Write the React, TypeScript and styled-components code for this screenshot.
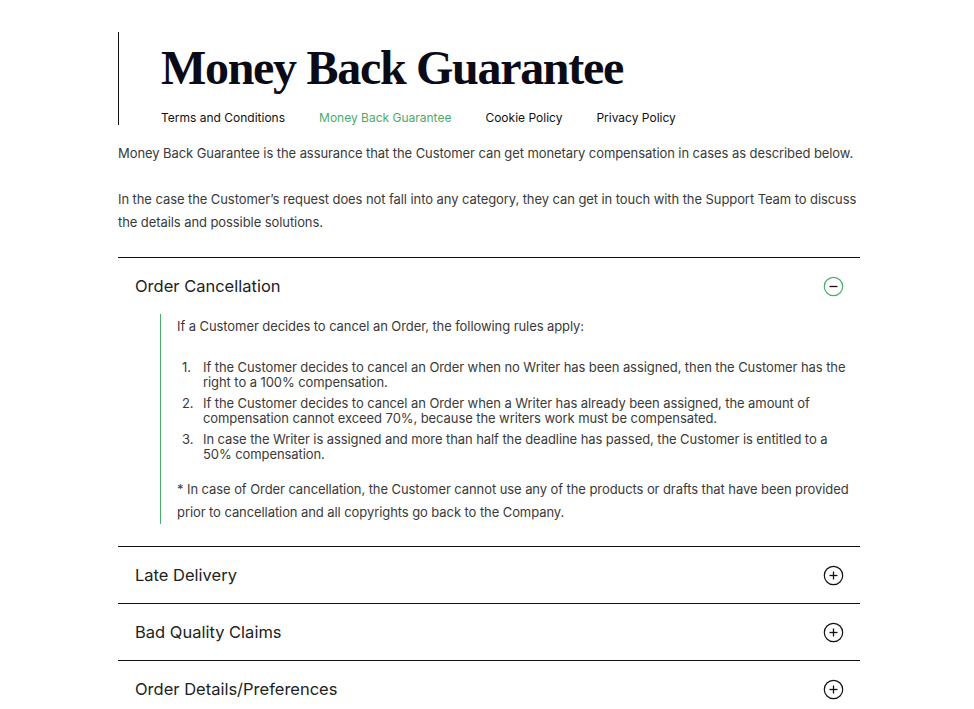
import React from "react";
import styled, { createGlobalStyle } from "styled-components";

const Global = createGlobalStyle`
  html, body { margin: 0; padding: 0; background: #fff; }
  body { font-family: Inter, "Noto Sans", sans-serif; color: #333; }
`;

const Page = styled.div`
  width: 742px;
  margin: 0 auto;
  padding: 32px 0 0 0;
  transform: translateX(2px);
`;

const Header = styled.header`
  border-left: 1px solid #111;
  padding-left: 42px;
  height: 93px;
  display: flex;
  flex-direction: column;
`;

const Title = styled.h1`
  margin: 10px 0 0 0;
  font-family: "Liberation Serif", serif;
  font-weight: 700;
  font-size: 48px;
  line-height: 52px;
  color: #0b0b18;
  letter-spacing: -1.3px;
`;

const Nav = styled.nav`
  display: flex;
  gap: 34px;
  margin-top: 16px;
`;

const NavLink = styled.a<{ $active?: boolean }>`
  font-size: 12px;
  line-height: 16px;
  color: ${(p) => (p.$active ? "#4bab6b" : "#111")};
  text-decoration: none;
`;

const Para = styled.p`
  margin: 0;
  font-size: 13px;
  line-height: 23px;
  letter-spacing: -0.08px;
  color: #3a3a3a;
  & + & { margin-top: 23px; }
`;

const Intro = styled.div`
  margin-top: 17px;
`;

const Accordion = styled.div`
  margin-top: 23px;
`;

const Item = styled.section`
  border-top: 1px solid #111;
`;

const ItemHead = styled.div`
  display: flex;
  align-items: center;
  justify-content: space-between;
  height: 56px;
  padding: 0 16px 0 17px;
`;

const ItemTitle = styled.h2`
  margin: 0;
  font-size: 16.5px;
  font-weight: 400;
  color: #222;
`;

const Body = styled.div`
  margin: 0 0 22px 42px;
  border-left: 1px solid #4cae6c;
  padding: 0 0 0 16px;
  font-size: 13px;
  letter-spacing: -0.08px;
  color: #3a3a3a;
`;

const Lead = styled.p`
  margin: 0;
  line-height: 23px;
  padding-top: 1px;
`;

const List = styled.ol`
  margin: 22px 0 0 0;
  padding: 0 8px 0 0;
  list-style: none;
  display: flex;
  flex-direction: column;
  gap: 6px;
`;

const ListItem = styled.li`
  display: grid;
  grid-template-columns: 26px 1fr;
  line-height: 15px;
`;

const Num = styled.span`
  padding-left: 5px;
`;

const Note = styled.p`
  margin: 16px 0 0 0;
  line-height: 23px;
`;

const Icon = ({ open }: { open?: boolean }) => (
  <svg width="21" height="21" viewBox="0 0 21 21" fill="none">
    <circle cx="10.5" cy="10.5" r="9.2" stroke={open ? "#4cae6c" : "#111"} strokeWidth="1.2" />
    <line x1="6.5" y1="10.5" x2="14.5" y2="10.5" stroke="#111" strokeWidth="1.3" />
    {!open && <line x1="10.5" y1="6.5" x2="10.5" y2="14.5" stroke="#111" strokeWidth="1.3" />}
  </svg>
);

const rules = [
  "If the Customer decides to cancel an Order when no Writer has been assigned, then the Customer has the right to a 100% compensation.",
  "If the Customer decides to cancel an Order when a Writer has already been assigned, the amount of compensation cannot exceed 70%, because the writers work must be compensated.",
  "In case the Writer is assigned and more than half the deadline has passed, the Customer is entitled to a 50% compensation.",
];

const closed = ["Late Delivery", "Bad Quality Claims", "Order Details/Preferences"];

export default function App() {
  return (
    <Page>
      <Global />
      <Header>
        <Title>Money Back Guarantee</Title>
        <Nav>
          <NavLink>Terms and Conditions</NavLink>
          <NavLink $active>Money Back Guarantee</NavLink>
          <NavLink>Cookie Policy</NavLink>
          <NavLink>Privacy Policy</NavLink>
        </Nav>
      </Header>
      <Intro>
        <Para>Money Back Guarantee is the assurance that the Customer can get monetary compensation in cases as described below.</Para>
        <Para>In the case the Customer’s request does not fall into any category, they can get in touch with the Support Team to discuss the details and possible solutions.</Para>
      </Intro>
      <Accordion>
        <Item>
          <ItemHead>
            <ItemTitle>Order Cancellation</ItemTitle>
            <Icon open />
          </ItemHead>
          <Body>
            <Lead>If a Customer decides to cancel an Order, the following rules apply:</Lead>
            <List>
              {rules.map((r, i) => (
                <ListItem key={i}>
                  <Num>{i + 1}.</Num>
                  <span>{r}</span>
                </ListItem>
              ))}
            </List>
            <Note>* In case of Order cancellation, the Customer cannot use any of the products or drafts that have been provided prior to cancellation and all copyrights go back to the Company.</Note>
          </Body>
        </Item>
        {closed.map((t) => (
          <Item key={t}>
            <ItemHead>
              <ItemTitle>{t}</ItemTitle>
              <Icon />
            </ItemHead>
          </Item>
        ))}
      </Accordion>
    </Page>
  );
}
